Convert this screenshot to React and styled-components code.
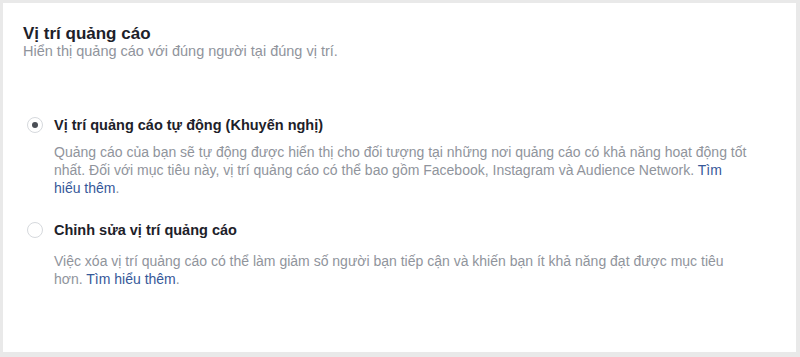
import React from "react";
import styled, { createGlobalStyle } from "styled-components";

const GlobalStyle = createGlobalStyle`
  html, body {
    margin: 0;
    padding: 0;
    background: #e9e9e9;
  }
  body {
    font-family: "Liberation Sans", Arial, sans-serif;
  }
`;

const Frame = styled.div`
  width: 800px;
  height: 357px;
  box-sizing: border-box;
  padding: 3px 4px 5px 3px;
  background: #e9e9e9;
`;

const Card = styled.div`
  height: 100%;
  box-sizing: border-box;
  background: #fff;
  padding: 21px 20px 0 20px;
`;

const Title = styled.h2`
  margin: 0;
  font-size: 17px;
  font-weight: bold;
  color: #1d2129;
  line-height: 19px;
`;

const Subtitle = styled.p`
  margin: 0;
  font-size: 14.5px;
  color: #90949c;
  line-height: 16px;
`;

const Options = styled.div`
  display: flex;
  flex-direction: column;
  gap: 24px;
  margin-top: 57px;
  padding-left: 4px;
`;

const Option = styled.div`
  display: grid;
  grid-template-columns: 27px 1fr;
  row-gap: ${(p) => p.gap}px;
`;

const Radio = styled.span`
  width: 16px;
  height: 16px;
  box-sizing: border-box;
  border-radius: 50%;
  border: 1px solid #d6d9dd;
  display: flex;
  align-items: center;
  justify-content: center;
  margin-top: 1px;

  &::after {
    content: "";
    width: 6px;
    height: 6px;
    border-radius: 50%;
    background: ${(p) => (p.checked ? "#4b4f56" : "transparent")};
  }
`;

const Label = styled.div`
  font-size: 14.5px;
  font-weight: bold;
  color: #1d2129;
  line-height: 18px;
`;

const Desc = styled.p`
  grid-column: 2;
  margin: 0;
  font-size: 14px;
  color: #90949c;
  line-height: 18px;
  white-space: nowrap;
`;

const Link = styled.a`
  color: #365899;
  text-decoration: none;
`;

export default function App() {
  return (
    <Frame>
      <GlobalStyle />
      <Card>
        <Title>Vị trí quảng cáo</Title>
        <Subtitle>Hiển thị quảng cáo với đúng người tại đúng vị trí.</Subtitle>
        <Options>
          <Option gap={9}>
            <Radio checked />
            <Label>Vị trí quảng cáo tự động (Khuyến nghị)</Label>
            <Desc>
              Quảng cáo của bạn sẽ tự động được hiển thị cho đối tượng tại những nơi quảng cáo có khả năng hoạt động tốt
              <br />
              nhất. Đối với mục tiêu này, vị trí quảng cáo có thể bao gồm Facebook, Instagram và Audience Network.{" "}
              <Link href="#">
                Tìm
                <br />
                hiểu thêm
              </Link>
              .
            </Desc>
          </Option>
          <Option gap={13}>
            <Radio />
            <Label>Chỉnh sửa vị trí quảng cáo</Label>
            <Desc>
              Việc xóa vị trí quảng cáo có thể làm giảm số người bạn tiếp cận và khiến bạn ít khả năng đạt được mục tiêu
              <br />
              hơn. <Link href="#">Tìm hiểu thêm</Link>.
            </Desc>
          </Option>
        </Options>
      </Card>
    </Frame>
  );
}
